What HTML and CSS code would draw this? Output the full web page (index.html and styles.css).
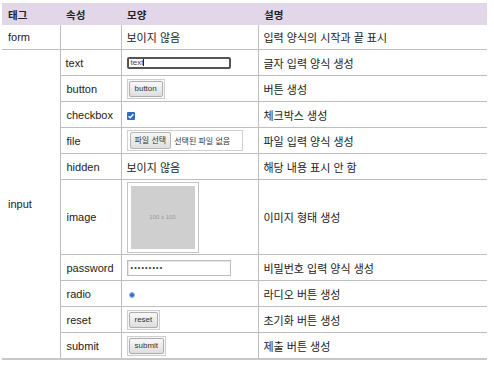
FILE: index.html
```html
<!DOCTYPE html>
<html lang="ko">
<head>
  <meta charset="UTF-8" />
  <title>폼 태그</title>
  <link rel="stylesheet" href="styles.css">
</head>
<body>

  <table class="tag-table">
    <colgroup>
      <col class="c-tag">
      <col class="c-attr">
      <col class="c-look">
      <col class="c-desc">
    </colgroup>
    <thead>
      <tr>
        <th>태그</th>
        <th>속성</th>
        <th>모양</th>
        <th>설명</th>
      </tr>
    </thead>
    <tbody>
      <tr class="row-form">
        <td>form</td>
        <td class="v"></td>
        <td class="v">보이지 않음</td>
        <td class="v">입력 양식의 시작과 끝 표시</td>
      </tr>
      <tr>
        <td rowspan="11" class="tag-cell">input</td>
        <td class="v">text</td>
        <td class="v"><span class="ui-text">text<i class="caret"></i></span></td>
        <td class="v">글자 입력 양식 생성</td>
      </tr>
      <tr>
        <td class="v">button</td>
        <td class="v"><span class="ui-btn"><span>button</span></span></td>
        <td class="v">버튼 생성</td>
      </tr>
      <tr>
        <td class="v">checkbox</td>
        <td class="v">
          <span class="ui-check">
            <svg width="8" height="8" viewBox="0 0 8 8"><path d="M1.6 4.2 L3.2 5.8 L6.4 2.2" fill="none" stroke="#fff" stroke-width="1.4"/></svg>
          </span>
        </td>
        <td class="v">체크박스 생성</td>
      </tr>
      <tr>
        <td class="v">file</td>
        <td class="v"><span class="ui-file"><span class="pick">파일 선택</span><span class="none">선택된 파일 없음</span></span></td>
        <td class="v">파일 입력 양식 생성</td>
      </tr>
      <tr>
        <td class="v">hidden</td>
        <td class="v">보이지 않음</td>
        <td class="v">해당 내용 표시 안 함</td>
      </tr>
      <tr class="row-image">
        <td class="v">image</td>
        <td class="v"><span class="ui-image"><span class="ph">100 x 100</span></span></td>
        <td class="v">이미지 형태 생성</td>
      </tr>
      <tr>
        <td class="v">password</td>
        <td class="v"><span class="ui-pass">•••••••••</span></td>
        <td class="v">비밀번호 입력 양식 생성</td>
      </tr>
      <tr>
        <td class="v">radio</td>
        <td class="v"><span class="ui-radio"></span></td>
        <td class="v">라디오 버튼 생성</td>
      </tr>
      <tr>
        <td class="v">reset</td>
        <td class="v"><span class="ui-btn"><span>reset</span></span></td>
        <td class="v">초기화 버튼 생성</td>
      </tr>
      <tr class="row-last">
        <td class="v">submit</td>
        <td class="v"><span class="ui-btn"><span>submit</span></span></td>
        <td class="v">제출 버튼 생성</td>
      </tr>
    </tbody>
  </table>

</body>
</html>
```

FILE: styles.css
```css
body {
  margin: 0;
  padding: 3px 2px 0;
  background: #fff;
  font-family: "Liberation Sans", "Noto Sans CJK KR", sans-serif;
  font-size: 11px;
  color: #222;
}

.tag-table {
  width: 485px;
  border-collapse: collapse;
  table-layout: fixed;
}

.c-tag { width: 58px; }
.c-attr { width: 61px; }
.c-look { width: 137px; }
.c-desc { width: 229px; }

.tag-table th {
  height: 22px;
  padding: 0 6px;
  background: #e2d7e9;
  text-align: left;
  font-weight: bold;
  font-size: 10.5px;
}

.tag-table td {
  height: 25px;
  padding: 0 5px;
  border-bottom: 1px solid #bdbdbd;
  vertical-align: middle;
  white-space: nowrap;
}

.tag-table td:first-child { padding-left: 6px; }

.tag-table td.v { border-left: 1px solid #bdbdbd; }

.row-form td { height: 24px; }
.row-image td { height: 74px; }
.row-last td { border-bottom: 2px solid #c8c8c8; }
.tag-table td.tag-cell { border-bottom: 2px solid #c8c8c8; }

/* 모양 칸의 입력 요소 흉내 */
.ui-text {
  display: inline-block;
  box-sizing: border-box;
  width: 104px;
  height: 12px;
  padding: 0 2px;
  border: 2px solid #555;
  border-radius: 2px;
  font-size: 8px;
  line-height: 8px;
  color: #444;
  vertical-align: middle;
}

.caret {
  display: inline-block;
  width: 1px;
  height: 7px;
  background: #222;
  vertical-align: -1px;
}

.ui-btn {
  display: inline-block;
  padding: 1px;
  border: 1px solid #cfcfcf;
  background: #f7f7f7;
  vertical-align: middle;
}

.ui-btn span {
  display: block;
  height: 14px;
  padding: 0 5px;
  border: 1px solid #adadad;
  border-radius: 2px;
  background: linear-gradient(#f8f8f8, #dedede);
  font-size: 8px;
  line-height: 14px;
  color: #333;
}

.ui-check {
  display: inline-block;
  width: 8px;
  height: 8px;
  background: #2d6cc2;
  border-radius: 1px;
  vertical-align: middle;
}

.ui-check svg { display: block; }

.ui-file {
  display: inline-flex;
  align-items: center;
  gap: 3px;
  box-sizing: border-box;
  width: 116px;
  height: 21px;
  padding: 0 2px;
  border: 1px solid #d0d0d0;
  vertical-align: middle;
}

.ui-file .pick {
  padding: 0 4px;
  height: 15px;
  line-height: 15px;
  border: 1px solid #b5b5b5;
  border-radius: 2px;
  background: linear-gradient(#f6f6f6, #e0e0e0);
  font-size: 8px;
  color: #333;
}

.ui-file .none {
  font-size: 8px;
  color: #333;
}

.ui-image {
  display: inline-block;
  padding: 3px;
  border: 1px solid #c4c4c4;
  vertical-align: middle;
}

.ui-image .ph {
  display: flex;
  align-items: center;
  justify-content: center;
  width: 64px;
  height: 63px;
  background: #cfcfcf;
  font-size: 6px;
  color: #9a9a9a;
}

.ui-pass {
  display: inline-block;
  box-sizing: border-box;
  width: 104px;
  height: 16px;
  padding: 0 3px;
  border: 1px solid #bdbdbd;
  box-shadow: inset 1px 1px 1px #e4e4e4;
  font-size: 7px;
  line-height: 14px;
  letter-spacing: 1.2px;
  color: #333;
  vertical-align: middle;
}

.ui-radio {
  display: inline-block;
  width: 4px;
  height: 4px;
  margin-left: 2px;
  border: 1.5px solid #9cbbe6;
  border-radius: 50%;
  background: #2f6fc8;
  vertical-align: middle;
}
```
